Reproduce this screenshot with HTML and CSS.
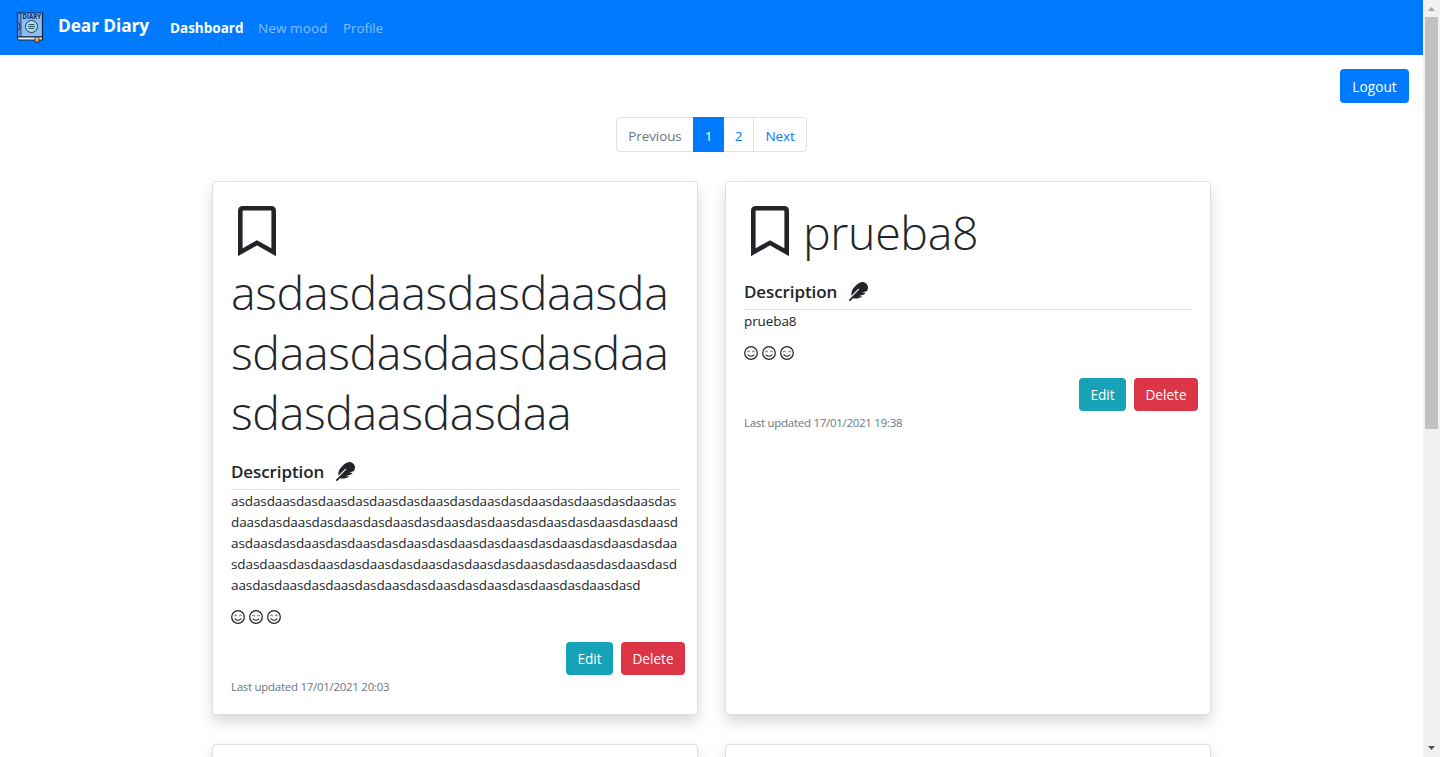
FILE: index.html
```html
<!DOCTYPE html>
<html lang="en">
<head>
<meta charset="utf-8">
<title>Dear Diary</title>
<link rel="stylesheet" href="styles.css">
</head>
<body>
<svg class="defs" width="0" height="0">
  <symbol id="bookmark" viewBox="0 0 38 50"><path d="M2.3 46.2V5Q2.3 2.3 5 2.3H33Q35.7 2.3 35.7 5V46.2L19 36.8Z" fill="none" stroke="currentColor" stroke-width="4.6"/></symbol>
  <symbol id="feather" viewBox="0 0 512 512"><path fill="currentColor" d="M467.14 44.84c-62.55-62.48-161.67-64.78-252.28 25.73-78.61 78.52-60.98 60.92-85.75 85.66-60.46 60.39-70.39 150.83-63.64 211.17l178.44-178.25c6.26-6.25 16.4-6.25 22.65 0s6.25 16.38 0 22.63L7.04 471.03c-9.38 9.37-9.38 24.57 0 33.94 9.38 9.37 24.6 9.37 33.98 0l66.1-66.03C159.42 454.65 279 457.11 353.95 384h-98.19l147.57-49.14c49.99-49.93 36.38-36.18 46.31-46.86h-97.78l131.54-43.8c45.44-74.46 34.31-148.84-16.26-199.36z"/></symbol>
  <symbol id="smile" viewBox="0 0 14 14"><g fill="none" stroke="currentColor" stroke-linecap="round"><circle cx="7" cy="7" r="6.3" stroke-width="1.25"/><path d="M3.4 5.7Q4.5 4.2 5.6 5.7M8.4 5.7Q9.5 4.2 10.6 5.7" stroke-width=".8"/><path d="M4 8.8Q7 11.8 10 8.8" stroke-width="1.1"/></g></symbol>
</svg>
<div class="window">
  <div class="page">
    <nav class="navbar">
      <svg class="logo" viewBox="0 0 28 32">
        <path d="M1.500 1H26.500V25H1.500Z" fill="#8bbcf5" stroke="#10263f" stroke-width="1.2"/>
        <path d="M1.500 1H5V25H1.500Z" fill="#5b93dc" stroke="#10263f" stroke-width=".7"/>
        <path d="M1.500 10Q4 11 4 14.500T1.500 19" fill="none" stroke="#10263f"/>
        <path d="M2 25H26.500V28H3Q1.500 28 1.500 26.500T2 25Z" fill="#f3f1ed" stroke="#10263f" stroke-width="1.1"/>
        <path d="M19 25H23V31L21 29.300 19 31Z" fill="#f5b041" stroke="#10263f" stroke-width=".7"/>
        <circle cx="15.500" cy="14.500" r="6" fill="#a5e2ec" stroke="#10263f" stroke-width=".9"/>
        <path d="M12.500 12.500H18.500M12 14.500H19M12.500 16.500H18.500" stroke="#10263f" stroke-width=".8"/>
        <text x="6.500" y="7.300" textLength="18.500" lengthAdjust="spacingAndGlyphs" class="logo-text">DIARY</text>
      </svg>
      <span class="brand">Dear Diary</span>
      <a class="nav-link active">Dashboard</a>
      <a class="nav-link mood">New mood</a>
      <a class="nav-link profile">Profile</a>
    </nav>
    <div class="toolbar"><button class="btn logout">Logout</button></div>
    <div class="pagination">
      <span class="page-item prev">Previous</span><span class="page-item current">1</span><span class="page-item two">2</span><span class="page-item next">Next</span>
    </div>
    <main class="cards">
      <article class="card">
        <h1 class="title"><svg class="bookmark"><use href="#bookmark"/></svg><span class="title-text">asdasdaasdasdaasda<br>sdaasdasdaasdasdaa<br>sdasdaasdasdaa</span></h1>
        <h5 class="heading"><span>Description</span><svg class="feather"><use href="#feather"/></svg></h5>
        <p class="text">asdasdaasdasdaasdasdaasdasdaasdasdaasdasdaasdasdaasdasdaasdas<br>daasdasdaasdasdaasdasdaasdasdaasdasdaasdasdaasdasdaasdasdaasd<br>asdaasdasdaasdasdaasdasdaasdasdaasdasdaasdasdaasdasdaasdasdaa<br>sdasdaasdasdaasdasdaasdasdaasdasdaasdasdaasdasdaasdasdaasdasd<br>aasdasdaasdasdaasdasdaasdasdaasdasdaasdasdaasdasdaasdasd</p>
        <div class="moods"><svg class="smile"><use href="#smile"/></svg><svg class="smile"><use href="#smile"/></svg><svg class="smile"><use href="#smile"/></svg></div>
        <div class="actions"><button class="btn edit">Edit</button><button class="btn delete">Delete</button></div>
        <small class="updated">Last updated 17/01/2021 20:03</small>
      </article>
      <article class="card">
        <h1 class="title short"><svg class="bookmark"><use href="#bookmark"/></svg><span class="title-text">prueba8</span></h1>
        <h5 class="heading"><span>Description</span><svg class="feather"><use href="#feather"/></svg></h5>
        <p class="text">prueba8</p>
        <div class="moods"><svg class="smile"><use href="#smile"/></svg><svg class="smile"><use href="#smile"/></svg><svg class="smile"><use href="#smile"/></svg></div>
        <div class="actions"><button class="btn edit">Edit</button><button class="btn delete">Delete</button></div>
        <small class="updated">Last updated 17/01/2021 19:38</small>
      </article>
      <article class="card"></article>
      <article class="card"></article>
    </main>
  </div>
  <div class="scrollbar">
    <svg class="arrow" viewBox="0 0 17 17"><path d="M5 11L8.500 7 12 11Z" fill="#a3a3a3"/></svg>
    <div class="thumb"></div>
    <svg class="arrow bottom" viewBox="0 0 17 17"><path d="M5 6L8.500 10 12 6Z" fill="#505050"/></svg>
  </div>
</div>
</body>
</html>
```
FILE: styles.css
```css
* { box-sizing: border-box; }
body { margin: 0; background: #fff; color: #212529; font: 13.5px/21px "Open Sans", "Noto Sans", sans-serif; letter-spacing: -.1px; overflow: hidden; }
.defs { position: absolute; }
svg { display: block; }
.window { display: grid; grid-template-columns: 1423px 17px; height: 757px; overflow: hidden; }
.page { height: 757px; overflow: hidden; }
.navbar { display: flex; align-items: center; height: 55px; padding: 0 16px; background: #007bff; color: #fff; white-space: nowrap; }
.logo { width: 28px; height: 32px; flex: none; }
.logo-text { font: bold 6.5px "Open Sans", sans-serif; letter-spacing: 0; fill: #10263f; }
.brand { width: 112px; margin-left: 14px; padding-bottom: 4px; font-size: 17.3px; font-weight: 700; }
.nav-link { padding-top: 2px; color: rgba(255,255,255,.5); }
.nav-link.active { width: 88px; color: #fff; font-weight: 700; letter-spacing: 0; }
.nav-link.mood { width: 85px; letter-spacing: .1px; }
.toolbar { display: flex; justify-content: flex-end; padding: 14px 14px 0 0; }
.btn { height: 33px; padding: 0; border: 0; border-radius: 4px; color: #fff; font: 13.6px/21px "Open Sans", sans-serif; letter-spacing: 0; }
.logout { width: 69px; height: 34px; background: #007bff; letter-spacing: .1px; }
.pagination { display: flex; width: 191px; height: 35px; margin: 14px 0 0 616px; border: 1px solid #dee2e6; border-radius: 4px; color: #007bff; }
.page-item { display: flex; align-items: center; justify-content: center; padding-top: 3px; }
.prev { width: 76px; color: #6c757d; }
.current { width: 31px; margin: -1px 0; background: #007bff; color: #fff; }
.two { width: 30px; border-right: 1px solid #dee2e6; }
.next { flex: 1; }
.cards { display: grid; grid-template-columns: 486px 486px; grid-template-rows: 534px 534px; column-gap: 27px; row-gap: 29px; margin: 29px 0 0 212px; }
.card { padding: 17.5px 18px 0; border: 1px solid #dfdfdf; border-radius: 4px; background: #fff; box-shadow: 0 7px 14px rgba(0,0,0,.15); }
.title { margin: 0; font-size: 46.5px; font-weight: 300; line-height: 60px; letter-spacing: -.35px; white-space: nowrap; }
.title .bookmark { width: 38px; height: 50px; margin: 6px 0 4px 7px; }
.title-text { display: block; padding-top: 2px; margin-bottom: -2px; }
.title.short { display: flex; height: 60px; }
.title.short .bookmark { flex: none; margin: 6px 14px 0 7px; }
.heading { display: flex; align-items: center; height: 30px; margin: 20px 0 1px; border-bottom: 1px solid #dfe0e1; padding-bottom: 6px; font-size: 17px; font-weight: 600; }
.feather { width: 19px; height: 19px; margin-left: 12px; }
.text { margin: 0; white-space: nowrap; }
.moods { display: flex; gap: 4px; margin-top: 14px; }
.smile { width: 14px; height: 14px; }
.actions { display: flex; justify-content: flex-end; gap: 8px; margin: 18px -6px 0 0; }
.edit { width: 47px; background: #17a2b8; }
.delete { width: 64px; background: #dc3545; }
.updated { display: block; margin-top: 1px; color: #6c757d; font-size: 11.5px; letter-spacing: -.28px; }
.scrollbar { display: flex; flex-direction: column; align-items: center; background: #f1f1f1; }
.arrow { width: 17px; height: 17px; }
.thumb { width: 13px; height: 412px; background: #c1c1c1; }
.bottom { margin-top: auto; }
```
